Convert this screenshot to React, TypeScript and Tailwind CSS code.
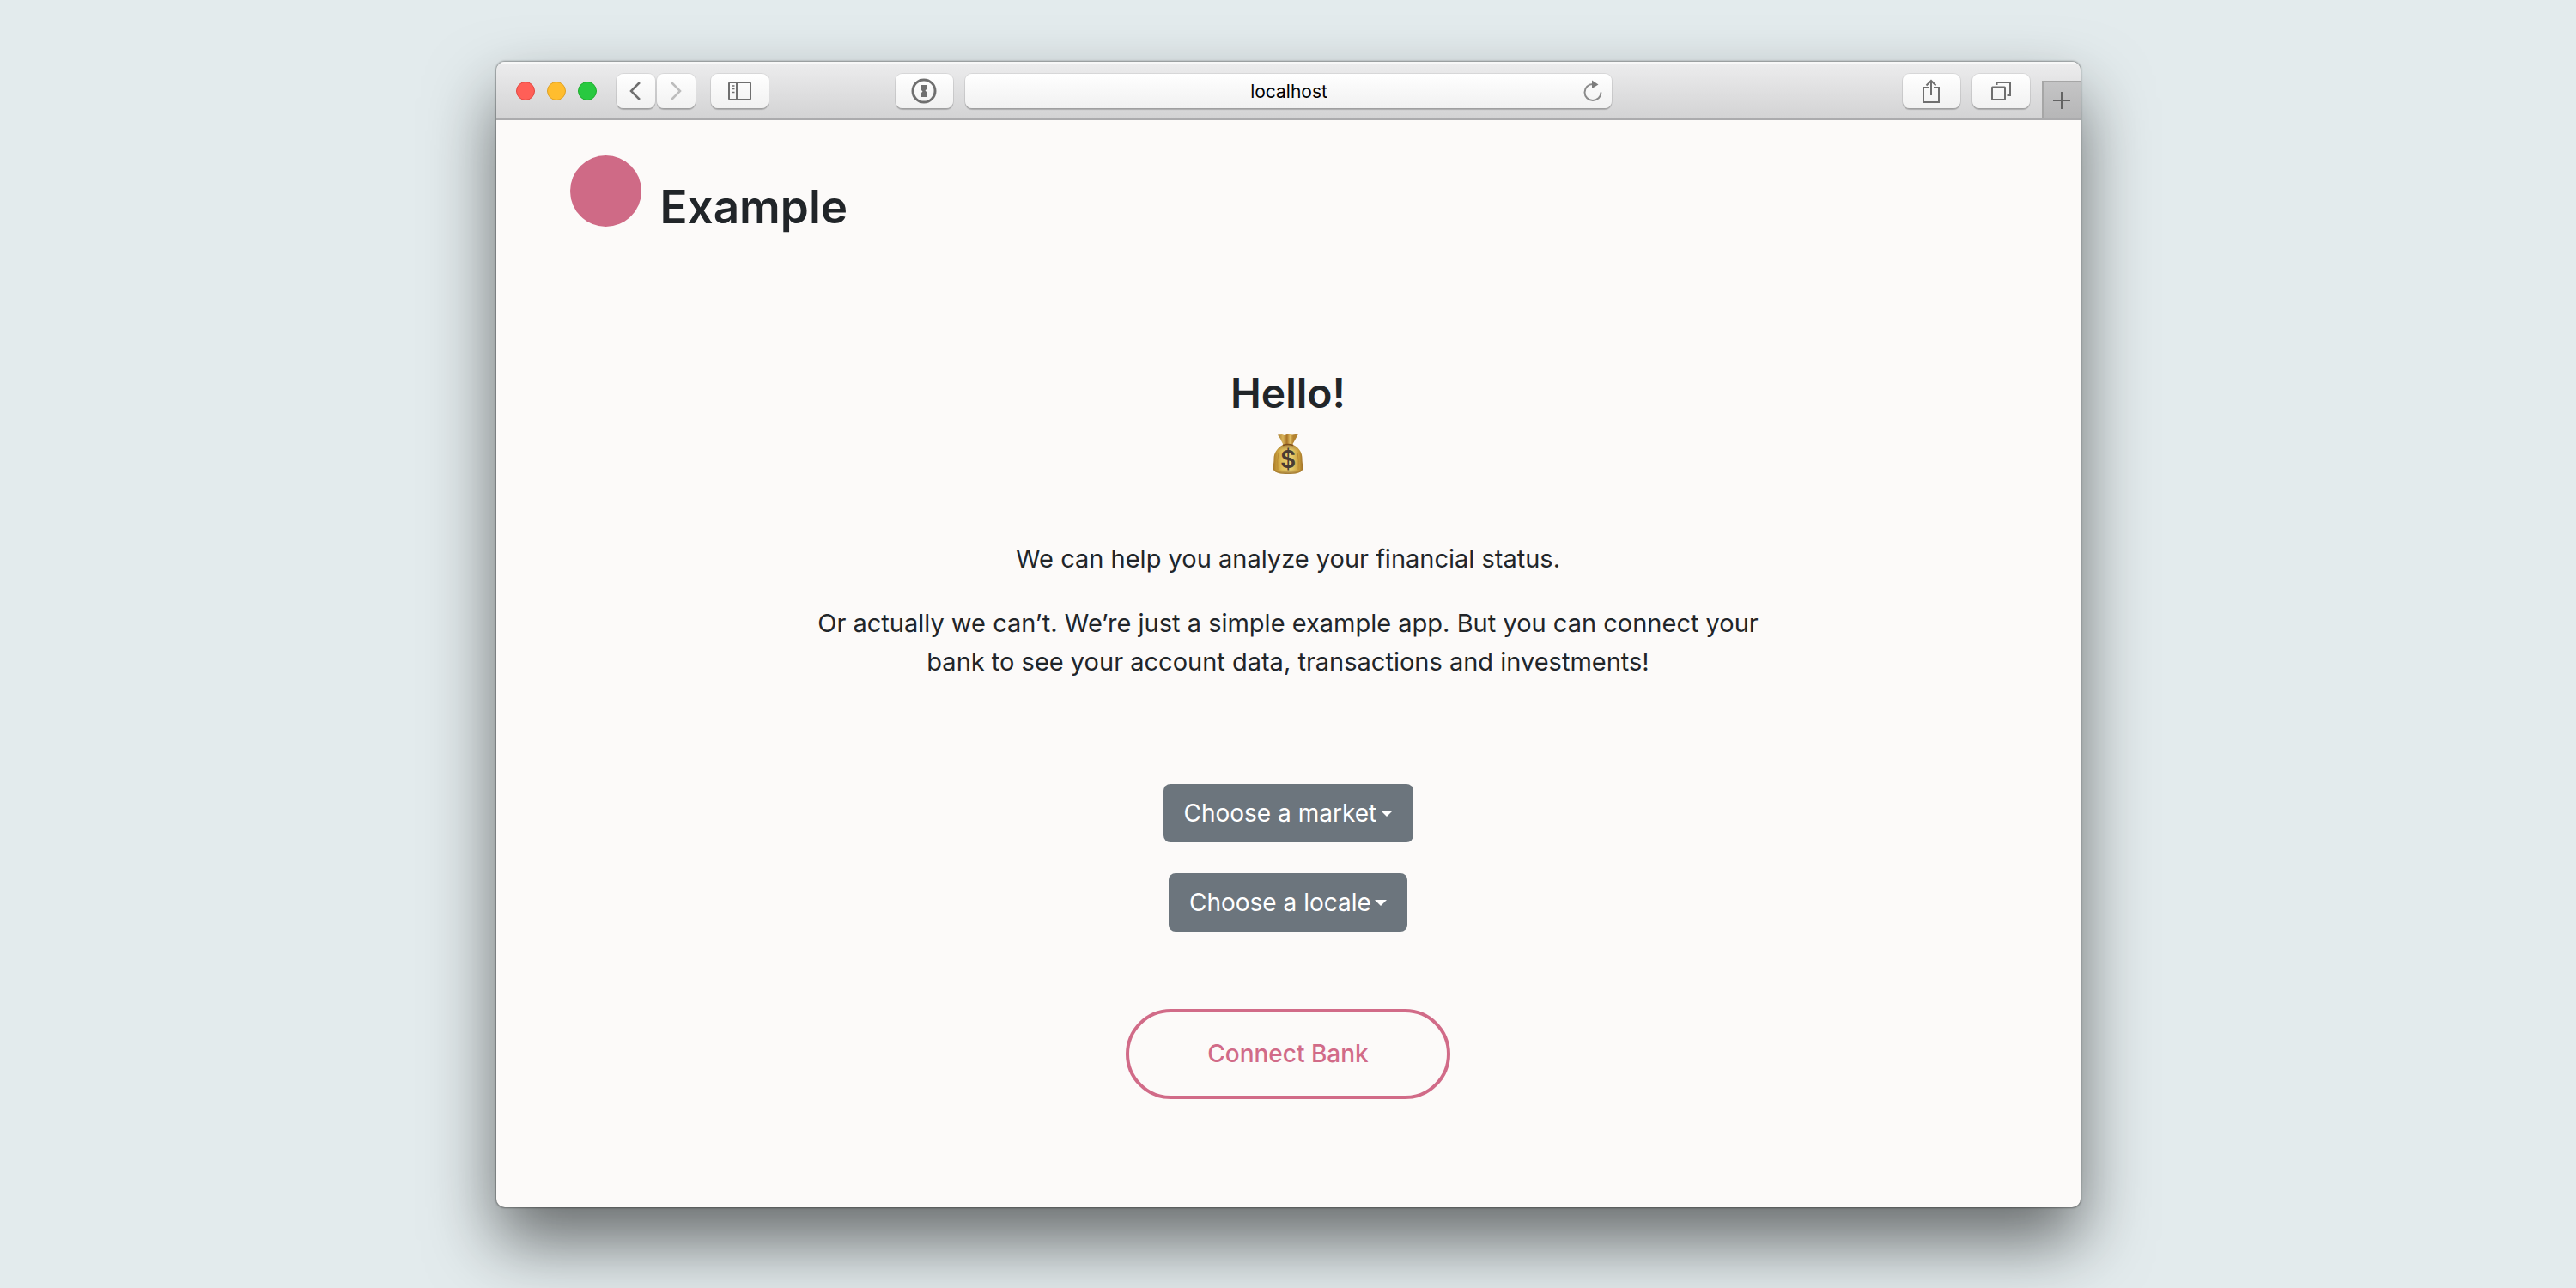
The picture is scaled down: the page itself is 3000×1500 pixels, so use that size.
import React from "react";

const toolButton =
  "flex h-10 items-center justify-center rounded-lg bg-linear-to-b from-white to-[#f1f1f1] text-[#6f6f6f] shadow-[0_0_0_1px_rgba(0,0,0,0.07),0_2px_1px_rgba(0,0,0,0.2)]";

const sackPath =
  "M12 14 H24 C32 18 34.500 24 34.500 30 C34.500 36 36 40 35 43 C33 47 26 48 18 48 C10 48 3 47 1 43 C0 40 1.500 36 1.500 30 C1.500 24 5 18 12 14 Z";

function MoneyBag() {
  return (
    <svg role="img" aria-label="Money bag" className="h-12 w-9" viewBox="0 0 36 48">
      <defs>
        <linearGradient id="bag" x1="0" y1="0" x2="1" y2="0">
          <stop offset="0" stopColor="#a87a2a" />
          <stop offset="0.15" stopColor="#cfa53f" />
          <stop offset="0.3" stopColor="#e6c75f" />
          <stop offset="0.6" stopColor="#efd778" />
          <stop offset="0.85" stopColor="#d2a840" />
          <stop offset="1" stopColor="#a07028" />
        </linearGradient>
        <linearGradient id="shade" x1="0" y1="0" x2="0" y2="1">
          <stop offset="0" stopColor="#7d4f1c" stopOpacity="0.55" />
          <stop offset="0.2" stopColor="#7d4f1c" stopOpacity="0.05" />
          <stop offset="0.85" stopColor="#7d4f1c" stopOpacity="0.05" />
          <stop offset="1" stopColor="#7d4f1c" stopOpacity="0.7" />
        </linearGradient>
        <linearGradient id="neck" x1="0" y1="0" x2="1" y2="0">
          <stop offset="0" stopColor="#a5782d" />
          <stop offset="0.25" stopColor="#d9b45a" />
          <stop offset="0.45" stopColor="#a87326" />
          <stop offset="0.6" stopColor="#e0bd63" />
          <stop offset="0.75" stopColor="#b5832f" />
          <stop offset="1" stopColor="#b08234" />
        </linearGradient>
      </defs>
      <path d="M6 2.500 L11 2 L14 3 L18 1.500 L23 2.500 L30 1.500 L27 7 L23.500 13 V16 H12 V13 L9 7 Z" fill="url(#neck)" />
      <path d={sackPath} fill="url(#bag)" />
      <path d={sackPath} fill="url(#shade)" />
      <path d="M12 14.500 Q18 12.500 24 14.500" stroke="#7d4f1c" strokeWidth="1.500" fill="none" />
      <path d="M7 23 Q5 32 6 43 M29 23 Q31 32 30 43" stroke="#b98a34" strokeWidth="1" fill="none" />
      <text x="18" y="41" textAnchor="middle" fontFamily="Inter, sans-serif" fontSize="28" fontWeight="600" fill="#4a3c33">$</text>
    </svg>
  );
}

function Toolbar() {
  return (
    <header className="flex h-[68px] items-center border-b-2 border-[#ababad] bg-linear-to-b from-[#ededee] to-[#d3d3d4] pt-0.5 shadow-[inset_0_2px_0_#f8f8f8]">
      <div className="flex flex-1 items-center justify-between">
        <div className="ml-[23px] flex items-center">
          <div className="flex gap-3.5">
            <button aria-label="Close" className="size-[22px] rounded-full border border-[#e2463f] bg-[#ff5f57]" />
            <button aria-label="Minimize" className="size-[22px] rounded-full border border-[#dfa023] bg-[#ffbd2e]" />
            <button aria-label="Zoom" className="size-[22px] rounded-full border border-[#1dad2b] bg-[#28c940]" />
          </div>
          <div className="ml-[23px] flex gap-0.5">
            <button aria-label="Back" className={`${toolButton} w-[45px]`}>
              <svg className="h-6 w-4" viewBox="0 0 16 24" fill="none" stroke="currentColor" strokeWidth="2.500">
                <path d="M13 2 L3 12 L13 22" />
              </svg>
            </button>
            <button aria-label="Forward" disabled className={`${toolButton} w-[45px]`}>
              <svg className="h-6 w-4" viewBox="0 0 16 24" fill="none" stroke="#bdbdbd" strokeWidth="2.500">
                <path d="M3 2 L13 12 L3 22" />
              </svg>
            </button>
          </div>
          <button aria-label="Sidebar" className={`${toolButton} ml-[18px] w-[67px]`}>
            <svg className="h-[22px] w-[27px]" viewBox="0 0 27 22" fill="none" stroke="currentColor">
              <rect x="1" y="1" width="25" height="20" rx="1" strokeWidth="2" />
              <path d="M10 1 V21" strokeWidth="2" />
              <path d="M4 5 H7.500 M4 8.500 H7.500 M4 12.500 H7.500" strokeWidth="1.500" />
            </svg>
          </button>
        </div>
        <button aria-label="Passwords" className={`${toolButton} mr-3.5 w-[67px]`}>
          <svg className="size-[30px]" viewBox="0 0 30 30">
            <circle cx="15" cy="15" r="13" fill="none" stroke="currentColor" strokeWidth="3" />
            <path d="M12 8 H18 V13 L16.500 14.500 L18 16 V22 H12 V17 L13.500 15.500 L12 14 Z" fill="currentColor" />
          </svg>
        </button>
      </div>

      <div className={`${toolButton} w-[753px] shrink`}>
        <input
          aria-label="Address"
          defaultValue="localhost"
          className="h-full min-w-0 flex-1 bg-transparent pl-9 text-center text-[21px] text-black outline-none"
        />
        <button aria-label="Reload" className="pr-2.5">
          <svg className="h-[26px] w-6" viewBox="0 0 24 26">
            <path d="M12 5 A9.500 9.500 0 1 0 21.500 14.500" fill="none" stroke="#8a8a8a" strokeWidth="2" />
            <path d="M11 0.500 L18.500 5.500 L11 10 Z" fill="#7c7c7c" />
          </svg>
        </button>
      </div>

      <div className="flex h-full flex-1 items-center justify-end gap-3.5">
        <button aria-label="Share" className={`${toolButton} w-[67px]`}>
          <svg className="h-7 w-[22px]" viewBox="0 0 22 28" fill="none" stroke="currentColor" strokeWidth="2">
            <path d="M8 10 H2 V27 H20 V10 H14" />
            <path d="M11 19 V2 M5.500 7.500 L11 2 L16.500 7.500" />
          </svg>
        </button>
        <button aria-label="Show tabs" className={`${toolButton} w-[67px]`}>
          <svg className="h-[22px] w-[23px]" viewBox="0 0 23 22" fill="none" stroke="currentColor" strokeWidth="2">
            <rect x="1" y="6.500" width="15" height="14.500" rx="0.500" />
            <path d="M6.500 4 V1 H22 V16 H18.500" />
          </svg>
        </button>
        <button
          aria-label="New tab"
          className="flex h-11 w-[45px] items-center justify-center self-end border-t-2 border-l-2 border-[#a6a6a6] bg-linear-to-b from-[#c4c4c5] to-[#b6b6b7]"
        >
          <svg className="size-5" viewBox="0 0 20 20" stroke="#636363" strokeWidth="2">
            <path d="M10 0 V20 M0 10 H20" />
          </svg>
        </button>
      </div>
    </header>
  );
}

function Picker({ label }: { label: string }) {
  return (
    <div className="relative">
      <select
        aria-label={label}
        className="block h-[68px] appearance-none rounded-lg bg-[#6c757d] pr-[42px] pl-6 text-[28px] text-white"
      >
        <option>{label}</option>
      </select>
      <span className="pointer-events-none absolute top-[31px] right-6 border-x-7 border-t-7 border-x-transparent border-t-white" />
    </div>
  );
}

export default function App() {
  return (
    <div className="min-h-screen bg-[#e3ebed] pt-[72px] pb-[94px] font-['Inter',sans-serif] text-[#212529]">
      <div className="mx-auto w-[61.5%] overflow-hidden rounded-[10px] bg-[#fcfaf9] shadow-[0_0_2px_1px_rgba(0,0,0,0.35),0_40px_80px_0_rgba(0,0,0,0.55)]">
        <Toolbar />
        <div className="px-[86px] pt-[41px] pb-[126px]">
          <div className="flex items-end gap-[22px]">
            <div className="size-[83px] rounded-full bg-[#cf6a86]" />
            <h1 className="text-[53px] leading-[46px] font-semibold">Example</h1>
          </div>
          <main className="mt-[164px] flex flex-col items-center text-center text-[29px] leading-[45px]">
            <h2 className="text-[48px] leading-[60px] font-semibold">Hello!</h2>
            <div className="mt-4">
              <MoneyBag />
            </div>
            <p className="mt-[76px]">We can help you analyze your financial status.</p>
            <p className="mt-[30px] max-w-[1140px]">
              Or actually we can’t. We’re just a simple example app. But you can connect your bank to see your account
              data, transactions and investments!
            </p>
            <div className="mt-[120px] flex flex-col items-center gap-9">
              <Picker label="Choose a market" />
              <Picker label="Choose a locale" />
            </div>
            <button className="mt-[90px] h-[105px] rounded-[54px] border-4 border-[#d16b88] px-[91px] text-[28px] font-medium text-[#d16b88]">
              Connect Bank
            </button>
          </main>
        </div>
      </div>
    </div>
  );
}
